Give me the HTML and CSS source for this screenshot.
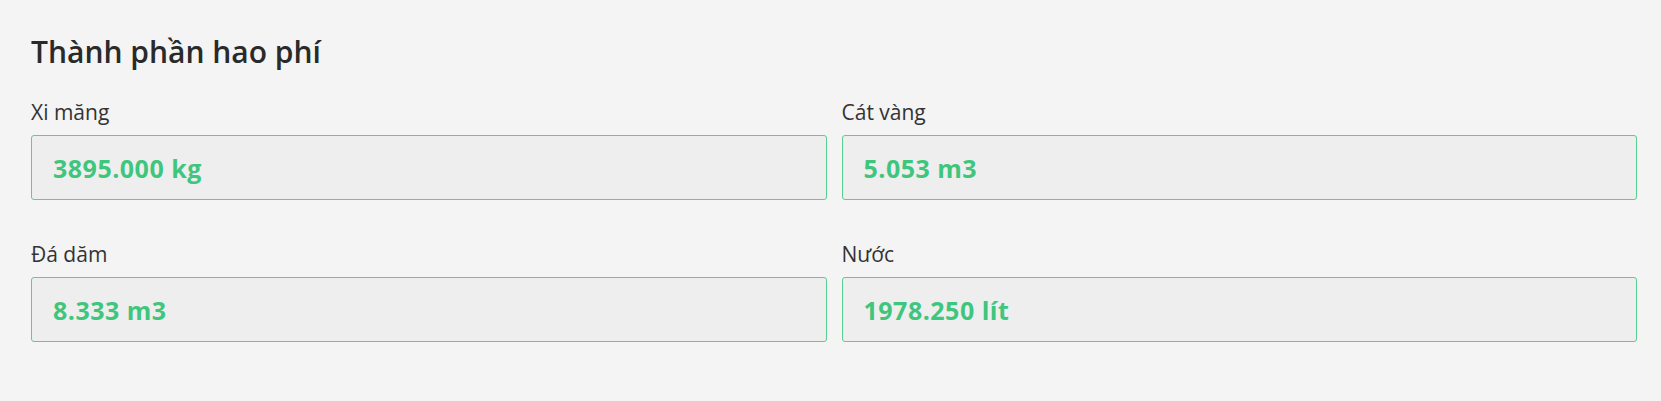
FILE: index.html
```html
<!DOCTYPE html>
<html lang="vi">
<head>
    <meta charset="UTF-8">
    <title>Thành phần hao phí</title>
    <link rel="stylesheet" href="styles.css">
</head>
<body>

<div class="panel">
    <h2>Thành phần hao phí</h2>

    <div class="grid">
        <div class="field">
            <label>Xi măng</label>
            <div class="value">3895.000 kg</div>
        </div>
        <div class="field">
            <label>Cát vàng</label>
            <div class="value">5.053 m3</div>
        </div>
        <div class="field">
            <label>Đá dăm</label>
            <div class="value">8.333 m3</div>
        </div>
        <div class="field">
            <label>Nước</label>
            <div class="value">1978.250 lít</div>
        </div>
    </div>
</div>

</body>
</html>
```

FILE: styles.css
```css
body {
    margin: 0;
    background: #f4f4f4;
    font-family: "Open Sans", "Liberation Sans", sans-serif;
    color: #2b2b2b;
}

.panel {
    padding: 34px 24px 0 31px;
}

h2 {
    margin: 0 0 30px;
    font-size: 30px;
    line-height: 36px;
    font-weight: 600;
    color: #2a2a2a;
}

.grid {
    display: grid;
    grid-template-columns: 1fr 1fr;
    column-gap: 15px;
    row-gap: 42px;
}

.field label {
    display: block;
    font-size: 21px;
    line-height: 24px;
    margin-bottom: 11px;
    color: #333;
}

.value {
    height: 65px;
    box-sizing: border-box;
    display: flex;
    align-items: center;
    padding: 0 21px;
    background: #eeeeee;
    border: 1px solid #5acd92;
    border-radius: 3px;
    color: #3fc67d;
    font-size: 25px;
    font-weight: 700;
    letter-spacing: 0.5px;
}
```
